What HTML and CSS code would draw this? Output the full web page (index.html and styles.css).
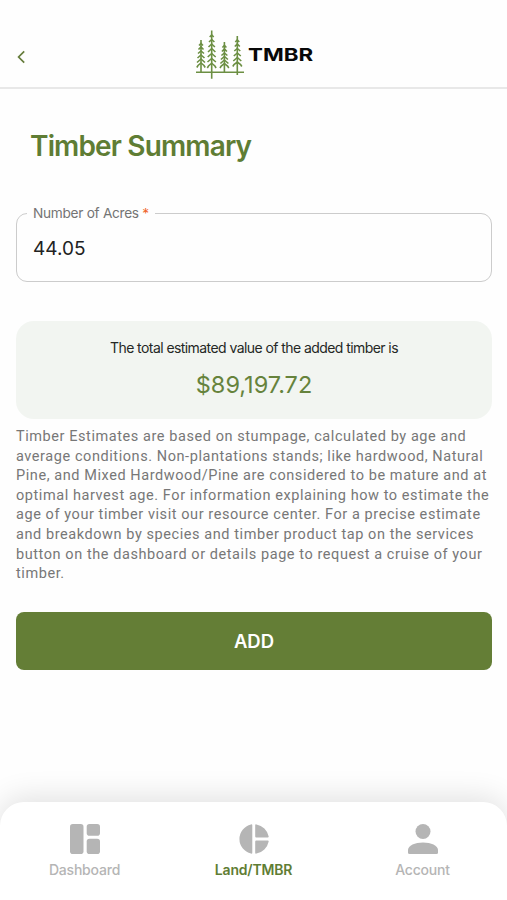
FILE: index.html
```html
<!DOCTYPE html>
<html lang="en">
<head>
<meta charset="utf-8">
<title>Timber Summary</title>
<link rel="stylesheet" href="styles.css">
</head>
<body>
<div class="screen">
  <header class="topbar">
    <button class="back" aria-label="Back"><svg width="10" height="14" viewBox="0 0 10 14"><path d="M8.2 1.4 2.6 7l5.6 5.6"/></svg></button>
    <div class="brand">
      <svg class="trees" width="50" height="50" viewBox="0 0 50 50">
        <path d="M1 42.2H49M6 10V42M16.700 .5V48.800M29.400 12V42M42.300 6V45"/>
        <path d="M4 15.500 6 13.500 8 15.500M3.500 19.500 6 17 8.500 19.500M3 23.500 6 21 9 23.500M2.500 28 6 25 9.500 28M2 32.500 6 29 10 32.500M1.800 37.500 3 35.500 6 33 9 35.500 10.200 37.500"/>
        <path d="M14.700 7 16.700 5 18.700 7M14 12 16.700 9.500 19.400 12M13.500 17 16.700 14 19.900 17M13 22 16.700 18.500 20.400 22M12.700 27 16.700 23.500 20.700 27M12.500 32 16.700 28.500 20.900 32M12.300 38 13.500 36 16.700 33.200 19.900 36 21.100 38"/>
        <path d="M27.400 17.500 29.400 15.500 31.400 17.500M26.900 21.500 29.400 19 31.900 21.500M26.400 25.500 29.400 23 32.400 25.500M25.900 29.500 29.400 26.500 32.900 29.500M25.400 33.500 29.400 30 33.400 33.500M25 38 26.200 36 29.400 33.500 32.600 36 33.800 38"/>
        <path d="M40.300 12 42.300 10 44.300 12M39.800 16.500 42.300 14 44.800 16.500M39.300 21 42.300 18.500 45.300 21M38.800 26 42.300 23 45.800 26M38.300 31 42.300 27.500 46.300 31M37.800 36.500 39 34.500 42.300 32 45.600 34.500 46.800 36.500"/>
      </svg>
      <span class="brand-name">TMBR</span>
    </div>
  </header>
  <main class="content">
    <h1 class="title">Timber Summary</h1>
    <fieldset class="field">
      <legend class="field-label">Number of Acres <span class="required">*</span></legend>
      <div class="field-value">44.05</div>
    </fieldset>
    <section class="total">
      <p class="total-label">The total estimated value of the added timber is</p>
      <p class="total-value">$89,197.72</p>
    </section>
    <p class="note">Timber Estimates are based on stumpage, calculated by age and<br>average conditions. Non-plantations stands; like hardwood, Natural<br>Pine, and Mixed Hardwood/Pine are considered to be mature and at<br>optimal harvest age. For information explaining how to estimate the<br>age of your timber visit our resource center. For a precise estimate<br>and breakdown by species and timber product tap on the services<br>button on the dashboard or details page to request a cruise of your<br>timber.</p>
    <button class="add">ADD</button>
  </main>
  <nav class="tabs">
    <a class="tab">
      <svg width="30" height="30" viewBox="0 0 30 30"><rect width="13.500" height="30" rx="2.800"/><rect x="16.700" width="13.300" height="11.700" rx="2.800"/><rect x="16.700" y="14.700" width="13.300" height="15.300" rx="2.800"/></svg>
      <span class="tab-name">Dashboard</span>
    </a>
    <a class="tab active">
      <svg width="30" height="30" viewBox="0 0 30 30"><path d="M12 .4a1 1 0 0 1 1.300 1V28.600a1 1 0 0 1-1.300 1A15 15 0 0 1 12 .4ZM16.200 1.400a1 1 0 0 1 1.300-1A15 15 0 0 1 29.600 12.200a1 1 0 0 1-1 1.300H17.200a1 1 0 0 1-1-1ZM17.200 16.500H28.600a1 1 0 0 1 1 1.300A15 15 0 0 1 17.500 29.600a1 1 0 0 1-1.300-1V17.500a1 1 0 0 1 1-1Z"/></svg>
      <span class="tab-name">Land/TMBR</span>
    </a>
    <a class="tab">
      <svg width="30" height="30" viewBox="0 0 30 30"><circle cx="15" cy="7.500" r="7.500"/><path d="M0 28.500V26C0 21.500 7 18.500 15 18.500S30 21.500 30 26V28.500Q30 30 28.500 30H1.500Q0 30 0 28.500Z"/></svg>
      <span class="tab-name">Account</span>
    </a>
  </nav>
</div>
</body>
</html>
```

FILE: styles.css
```css
* { box-sizing: border-box; }
body { margin: 0; background: #fff; font-family: Inter, "Liberation Sans", sans-serif; }
button { border: 0; padding: 0; background: none; font: inherit; }
p, h1 { margin: 0; }
.screen { width: 507px; height: 900px; display: flex; flex-direction: column; overflow: hidden; background: #fefefe; }
.topbar { height: 89px; flex: none; display: grid; grid-template-columns: 195px 1fr; align-items: start; border-bottom: 2px solid #e8e8e8; }
.back { justify-self: start; margin: 50px 0 0 16px; height: 14px; display: flex; }
.back svg { fill: none; stroke: #667d3c; stroke-width: 1.7; }
.brand { display: flex; margin-top: 30px; }
.trees { fill: none; stroke: #6c8f43; stroke-width: 1.6; }
.brand-name { margin: 14px 0 0 3px; font-size: 18px; line-height: 22px; font-weight: 700; color: #080808; transform: scaleX(1.24); transform-origin: left; }
.content { flex: 1; padding: 0 15px 0 16px; }
.title { margin: 39px 0 0 14px; height: 36px; line-height: 36px; font-size: 28px; font-weight: 600; letter-spacing: -.85px; color: #5f7d34; white-space: nowrap; }
.field { margin: 40px 0 0; padding: 0 16px; height: 78px; border: 1.500px solid #ccc; border-radius: 11px; min-width: 0; }
.field-label { margin-left: -6px; padding: 0 6px; height: 18px; line-height: 18px; font-size: 13.700px; letter-spacing: -.3px; color: #747474; white-space: nowrap; }
.required { color: #f0642b; }
.field-value { margin-top: 14px; line-height: 26px; font-size: 19px; color: #222; }
.total { margin-top: 39px; height: 98px; padding-top: 17px; border-radius: 18px; background: #f2f5f1; text-align: center; }
.total-label { line-height: 20px; font-size: 14px; letter-spacing: -.57px; color: #252825; }
.total-value { margin-top: 11px; line-height: 32px; font-size: 23.500px; color: #66833c; }
.note { margin-top: 8px; line-height: 19.600px; font-family: Roboto, sans-serif; font-size: 14.500px; letter-spacing: .57px; color: #777; white-space: nowrap; }
.add { display: block; width: 476px; height: 58px; margin-top: 28px; border-radius: 8px; background: #647e36; color: #fff; font-size: 18.500px; font-weight: 600; text-align: center; }
.tabs { height: 98px; flex: none; display: grid; grid-template-columns: repeat(3, 169px); padding-top: 22px; border-radius: 24px 24px 0 0; background: #fff; box-shadow: 0 -4px 30px rgba(0, 0, 0, .12); }
.tab { display: flex; flex-direction: column; align-items: center; color: #b5b5b5; }
.tab svg { fill: #b5b5b5; }
.tab-name { margin-top: 6.500px; line-height: 18px; font-size: 14px; font-weight: 500; letter-spacing: -.2px; }
.active .tab-name { color: #5f7d34; font-weight: 600; }
```
